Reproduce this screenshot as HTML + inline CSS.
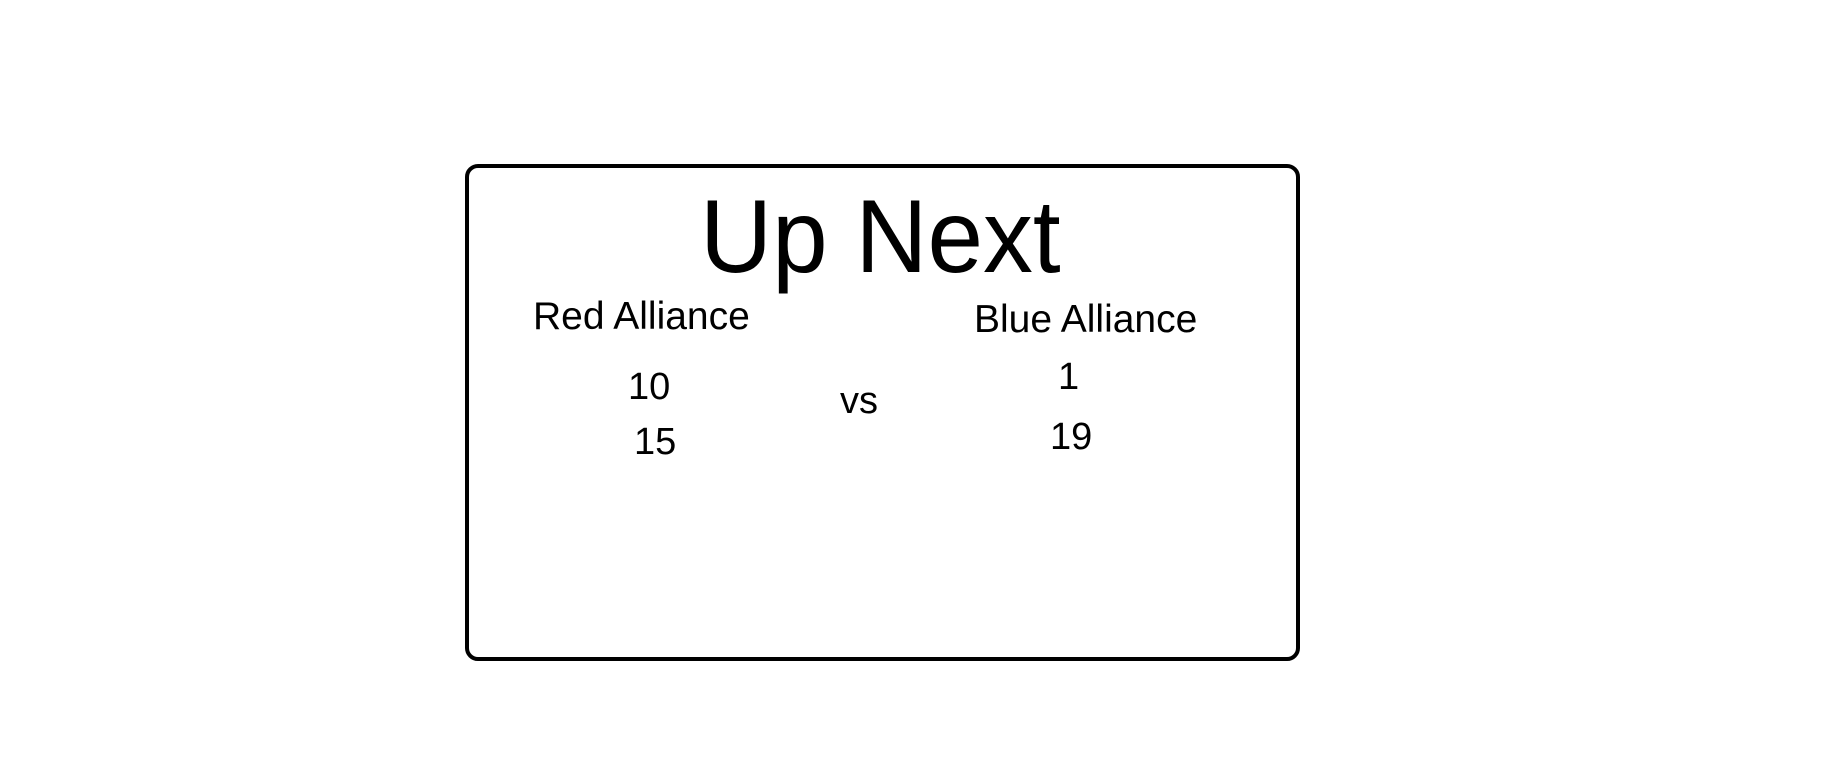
<!DOCTYPE html>
<html><head><style>
html,body{margin:0;padding:0;background:#fff;width:1845px;height:763px;overflow:hidden;position:relative;font-family:"Liberation Sans",Arial,sans-serif;color:#000}
.box{position:absolute;left:465px;top:164px;width:827px;height:489px;border:4px solid #000;border-radius:13px}
.t{position:absolute;line-height:1;white-space:nowrap;transform-origin:0 0}
</style></head><body>
<div class="box"></div>
<div class="t" style="left:700px;top:185px;font-size:104px;transform:scaleX(0.96)">Up Next</div>
<div class="t" style="left:533px;top:297px;font-size:39px">Red Alliance</div>
<div class="t" style="left:974px;top:300px;font-size:39px">Blue Alliance</div>
<div class="t" style="left:628px;top:368px;font-size:38px">10</div>
<div class="t" style="left:634px;top:423px;font-size:38px">15</div>
<div class="t" style="left:840px;top:382px;font-size:38px">vs</div>
<div class="t" style="left:1058px;top:358px;font-size:38px">1</div>
<div class="t" style="left:1050px;top:418px;font-size:38px">19</div>
</body></html>
